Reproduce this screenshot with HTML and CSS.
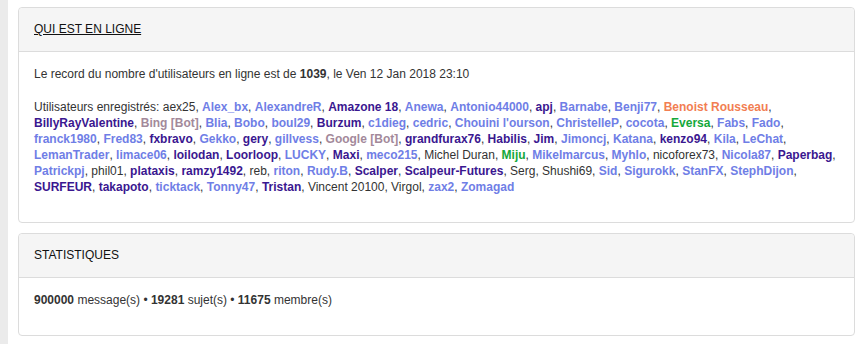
FILE: index.html
```html
<!DOCTYPE html>
<html lang="fr">
<head>
    <meta charset="UTF-8">
    <title>Qui est en ligne</title>
    <link rel="stylesheet" href="styles.css">
</head>
<body>

<div class="page">
    <div class="side-strip"></div>

    <div class="content">
        <div class="panel">
            <div class="panel-heading">
                <a href="#" class="panel-title">QUI EST EN LIGNE</a>
            </div>
            <div class="panel-body">
                <p>Le record du nombre d'utilisateurs en ligne est de <strong>1039</strong>, le Ven 12 Jan 2018 23:10</p>
                <p class="users">Utilisateurs enregistrés: aex25,
                    <a href="#" class="u-light">Alex_bx</a>,
                    <a href="#" class="u-light">AlexandreR</a>,
                    <a href="#" class="u-dark">Amazone 18</a>,
                    <a href="#" class="u-light">Anewa</a>,
                    <a href="#" class="u-light">Antonio44000</a>,
                    <a href="#" class="u-dark">apj</a>,
                    <a href="#" class="u-light">Barnabe</a>,
                    <a href="#" class="u-light">Benji77</a>,
                    <a href="#" class="u-orange">Benoist Rousseau</a>,
                    <a href="#" class="u-dark">BillyRayValentine</a>,
                    <a href="#" class="u-bot">Bing [Bot]</a>,
                    <a href="#" class="u-light">Blia</a>,
                    <a href="#" class="u-light">Bobo</a>,
                    <a href="#" class="u-light">boul29</a>,
                    <a href="#" class="u-dark">Burzum</a>,
                    <a href="#" class="u-light">c1dieg</a>,
                    <a href="#" class="u-light">cedric</a>,
                    <a href="#" class="u-light">Chouini l'ourson</a>,
                    <a href="#" class="u-light">ChristelleP</a>,
                    <a href="#" class="u-light">cocota</a>,
                    <a href="#" class="u-green">Eversa</a>,
                    <a href="#" class="u-light">Fabs</a>,
                    <a href="#" class="u-light">Fado</a>,
                    <a href="#" class="u-light">franck1980</a>,
                    <a href="#" class="u-light">Fred83</a>,
                    <a href="#" class="u-dark">fxbravo</a>,
                    <a href="#" class="u-light">Gekko</a>,
                    <a href="#" class="u-dark">gery</a>,
                    <a href="#" class="u-light">gillvess</a>,
                    <a href="#" class="u-bot">Google [Bot]</a>,
                    <a href="#" class="u-dark">grandfurax76</a>,
                    <a href="#" class="u-dark">Habilis</a>,
                    <a href="#" class="u-dark">Jim</a>,
                    <a href="#" class="u-light">Jimoncj</a>,
                    <a href="#" class="u-light">Katana</a>,
                    <a href="#" class="u-dark">kenzo94</a>,
                    <a href="#" class="u-light">Kila</a>,
                    <a href="#" class="u-light">LeChat</a>,
                    <a href="#" class="u-light">LemanTrader</a>,
                    <a href="#" class="u-light">limace06</a>,
                    <a href="#" class="u-dark">loilodan</a>,
                    <a href="#" class="u-dark">Loorloop</a>,
                    <a href="#" class="u-light">LUCKY</a>,
                    <a href="#" class="u-dark">Maxi</a>,
                    <a href="#" class="u-light">meco215</a>,
                    Michel Duran,
                    <a href="#" class="u-green">Miju</a>,
                    <a href="#" class="u-light">Mikelmarcus</a>,
                    <a href="#" class="u-light">Myhlo</a>,
                    nicoforex73,
                    <a href="#" class="u-light">Nicola87</a>,
                    <a href="#" class="u-dark">Paperbag</a>,
                    <a href="#" class="u-light">Patrickpj</a>,
                    phil01,
                    <a href="#" class="u-dark">plataxis</a>,
                    <a href="#" class="u-dark">ramzy1492</a>,
                    reb,
                    <a href="#" class="u-light">riton</a>,
                    <a href="#" class="u-light">Rudy.B</a>,
                    <a href="#" class="u-dark">Scalper</a>,
                    <a href="#" class="u-dark">Scalpeur-Futures</a>,
                    Serg,
                    Shushi69,
                    <a href="#" class="u-light">Sid</a>,
                    <a href="#" class="u-light">Sigurokk</a>,
                    <a href="#" class="u-light">StanFX</a>,
                    <a href="#" class="u-light">StephDijon</a>,
                    <a href="#" class="u-dark">SURFEUR</a>,
                    <a href="#" class="u-dark">takapoto</a>,
                    <a href="#" class="u-light">ticktack</a>,
                    <a href="#" class="u-light">Tonny47</a>,
                    <a href="#" class="u-dark">Tristan</a>,
                    Vincent 20100,
                    Virgol,
                    <a href="#" class="u-light">zax2</a>,
                    <a href="#" class="u-light">Zomagad</a>
                </p>
            </div>
        </div>

        <div class="panel">
            <div class="panel-heading">
                <span class="panel-title">STATISTIQUES</span>
            </div>
            <div class="panel-body">
                <p><strong>900000</strong> message(s) &bull; <strong>19281</strong> sujet(s) &bull; <strong>11675</strong> membre(s)</p>
            </div>
        </div>
    </div>
</div>

</body>
</html>
```

FILE: styles.css
```css
body {
    margin: 0;
    background: white;
    font-family: 'Liberation Sans', Arial, Helvetica, sans-serif;
    font-size: 12px;
    color: #333;
}

.page {
    display: flex;
    min-height: 344px;
}

.side-strip {
    width: 8px;
    background: #ebebeb;
    flex-shrink: 0;
}

.content {
    flex: 1;
    padding: 7px 8px 0 10px;
}

.panel {
    border: 1px solid #dcdcdc;
    border-radius: 4px;
    margin-bottom: 10px;
    background: white;
}

.panel-heading {
    background: #f5f5f5;
    border-bottom: 1px solid #dcdcdc;
    border-radius: 4px 4px 0 0;
    padding: 14px 15px;
    line-height: 15px;
}

.panel-title {
    color: #111;
}

a.panel-title {
    text-decoration: underline;
}

.panel-body {
    padding: 14px 15px 27px;
    line-height: 16px;
}

.panel-body p {
    margin: 0;
}

.panel-body p + p {
    margin-top: 17px;
}

.users a {
    font-weight: bold;
    text-decoration: none;
}

.u-light {
    color: #6f7ee6;
}

.u-dark {
    color: #3a1790;
}

.u-orange {
    color: #f27e52;
}

.u-green {
    color: #14a83b;
}

.u-bot {
    color: #a3899a;
}
```
